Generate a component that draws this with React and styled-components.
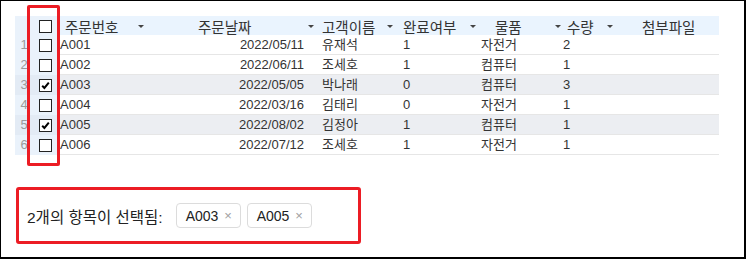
import React from 'react';
import styled, { createGlobalStyle } from 'styled-components';

const GlobalStyle = createGlobalStyle`
  html, body { margin: 0; padding: 0; background: #fff; }
  body { font-family: "Liberation Sans", "Noto Sans CJK KR", sans-serif; }
`;

const columns = [
  { key: 'id', title: '주문번호', width: 91, textPad: 8, arrow: 81 },
  { key: 'date', title: '주문날짜', width: 171, textPad: 50, arrow: 160, right: true },
  { key: 'name', title: '고객이름', width: 81, textPad: 3, arrow: 68 },
  { key: 'done', title: '완료여부', width: 78, textPad: 3, arrow: 70 },
  { key: 'item', title: '물품', width: 82, textPad: 17, arrow: 77 },
  { key: 'qty', title: '수량', width: 60, textPad: 7, arrow: 47 },
  { key: 'file', title: '첨부파일', width: 99, textPad: 22 },
];

const rows = [
  { id: 'A001', date: '2022/05/11', name: '유재석', done: 1, item: '자전거', qty: 2, file: '' },
  { id: 'A002', date: '2022/06/11', name: '조세호', done: 1, item: '컴퓨터', qty: 1, file: '' },
  { id: 'A003', date: '2022/05/05', name: '박나래', done: 0, item: '컴퓨터', qty: 3, file: '' },
  { id: 'A004', date: '2022/03/16', name: '김태리', done: 0, item: '자전거', qty: 1, file: '' },
  { id: 'A005', date: '2022/08/02', name: '김정아', done: 1, item: '컴퓨터', qty: 1, file: '' },
  { id: 'A006', date: '2022/07/12', name: '조세호', done: 1, item: '자전거', qty: 1, file: '' },
];

const template = `18px 24px ${columns.map(c => c.width + 'px').join(' ')}`;

const Check = ({ checked }) => (
  <CheckBox>
    {checked && (
      <svg width="11" height="11" viewBox="0 0 11 11">
        <path d="M2.2 5.8 L4.4 8 L8.8 2.6" fill="none" stroke="#000" strokeWidth="2" />
      </svg>
    )}
  </CheckBox>
);

const App = () => {
  const [selected] = React.useState(['A003', 'A005']);
  return (
    <>
      <GlobalStyle />
      <Frame>
        <GridWrap>
          <HeaderRow>
            <NumCell />
            <CheckCell><Check /></CheckCell>
            {columns.map(c => (
              <HeadCell key={c.key} $pad={c.textPad}>
                <HeadText $w={c.arrow ? c.arrow - c.textPad : null}>{c.title}</HeadText>
                {c.arrow && <Arrow />}
              </HeadCell>
            ))}
          </HeaderRow>
          {rows.map((r, i) => {
            const on = selected.includes(r.id);
            return (
              <Row key={r.id}>
                <NumCell $on={on}>{i + 1}</NumCell>
                <CheckCell $on={on}><Check checked={on} /></CheckCell>
                {columns.map(c => (
                  <Cell key={c.key} $on={on} $right={c.right}>{r[c.key]}</Cell>
                ))}
              </Row>
            );
          })}
          <Marker />
        </GridWrap>
        <SelectionBox>
          <Label>2개의 항목이 선택됨:</Label>
          <Chips>
            {selected.map(id => (
              <Chip key={id}>
                {id}
                <Remove>×</Remove>
              </Chip>
            ))}
          </Chips>
        </SelectionBox>
      </Frame>
    </>
  );
};

const Frame = styled.div`
  box-sizing: border-box;
  width: 746px;
  height: 259px;
  border-left: 1px solid #000;
  border-top: 1px solid #000;
  border-right: 2px solid #000;
  border-bottom: 2px solid #000;
  padding: 15px 0 0 14px;
  display: flex;
  flex-direction: column;
  gap: 32px;
`;

const GridWrap = styled.div`
  position: relative;
  width: 704px;
`;

const HeaderRow = styled.div`
  display: grid;
  grid-template-columns: ${template};
  height: 19px;
  background: #eaf4fe;
`;

const Row = styled.div`
  display: grid;
  grid-template-columns: ${template};
  height: 20px;
`;

const NumCell = styled.div`
  box-sizing: border-box;
  background: ${p => (p.$on ? '#e3ebf5' : '#eaf2fb')};
  color: #9a9a9a;
  font-size: 13px;
  text-align: center;
  line-height: 20px;
`;

const CheckCell = styled.div`
  display: flex;
  align-items: center;
  justify-content: center;
  background: ${p => (p.$on ? '#e3ebf5' : '#eaf2fb')};
`;

const CheckBox = styled.span`
  box-sizing: border-box;
  width: 13px;
  height: 13px;
  border: 1px solid #222;
  background: #fff;
  display: flex;
  align-items: center;
  justify-content: center;
`;

const HeadCell = styled.div`
  display: flex;
  align-items: center;
  padding-left: ${p => p.$pad}px;
  font-size: 14.5px;
  color: #333;
  white-space: nowrap;
`;

const HeadText = styled.span`
  flex: none;
  width: ${p => (p.$w ? p.$w + 'px' : 'auto')};
`;

const Arrow = styled.span`
  width: 0;
  height: 0;
  border-left: 3px solid transparent;
  border-right: 3px solid transparent;
  border-top: 3px solid #444;
`;

const Cell = styled.div`
  box-sizing: border-box;
  background: ${p => (p.$on ? '#eceef2' : '#fff')};
  border-bottom: 1px solid #e6e6e6;
  font-size: 13px;
  line-height: 19px;
  color: #333;
  white-space: nowrap;
  text-align: ${p => (p.$right ? 'right' : 'left')};
  padding: ${p => (p.$right ? '0 15px 0 0' : '0 0 0 3px')};
`;

const Marker = styled.div`
  position: absolute;
  left: 12px;
  top: -11px;
  width: 33px;
  height: 161px;
  box-sizing: border-box;
  border: 3px solid #ec1c24;
  border-radius: 2px;
  pointer-events: none;
`;

const SelectionBox = styled.div`
  box-sizing: border-box;
  width: 345px;
  height: 57px;
  margin-left: 1px;
  border: 3px solid #ec1c24;
  border-radius: 3px;
  display: flex;
  align-items: center;
  padding: 0 0 0 8px;
  gap: 13px;
`;

const Label = styled.span`
  font-size: 15.5px;
  color: #222;
  white-space: nowrap;
`;

const Chips = styled.div`
  display: flex;
  gap: 6px;
`;

const Chip = styled.span`
  box-sizing: border-box;
  height: 25px;
  width: 65px;
  border: 1px solid #dcdcdc;
  border-radius: 4px;
  display: flex;
  align-items: center;
  padding-left: 9px;
  font-size: 14px;
  color: #222;
`;

const Remove = styled.span`
  color: #a0a0a0;
  font-size: 13px;
  margin-left: 6px;
`;

export default App;
